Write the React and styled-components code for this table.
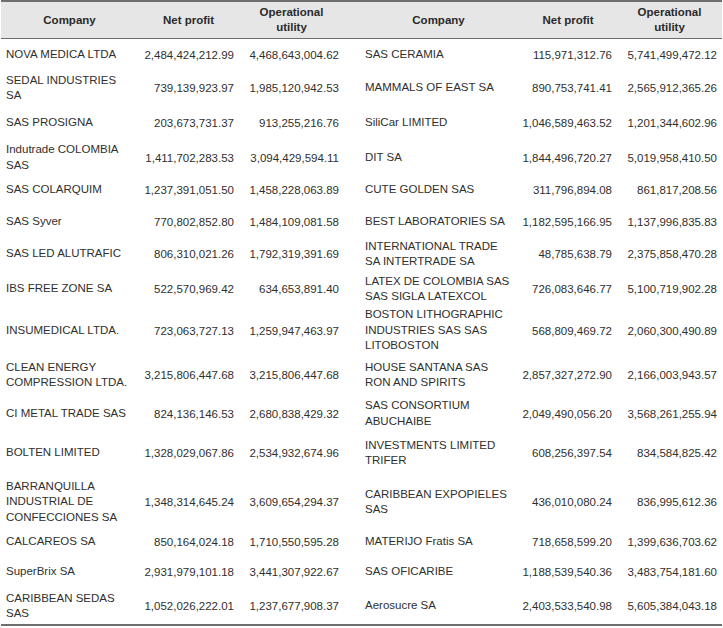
import React from "react";
import styled, { createGlobalStyle } from "styled-components";

const GlobalStyle = createGlobalStyle`
    body {
        margin: 0;
        background: #ffffff;
        font-family: "Liberation Sans", Arial, sans-serif;
    }
`;

const Page = styled.div`
    width: 723px;
    height: 628px;
    padding: 0 1px 0 1px;
    box-sizing: border-box;
    background: #ffffff;
`;

const Table = styled.table`
    width: 721px;
    table-layout: fixed;
    border-collapse: collapse;
    border-top: 2px solid #6e6e6e;
    border-bottom: 2px solid #6e6e6e;
    font-size: 11.5px;
    color: #2f2f2f;
`;

const HeadRow = styled.tr`
    height: 37px;
    background: #e6e6e6;
    border-bottom: 1.5px solid #6e6e6e;
`;

const HeadCell = styled.th`
    font-weight: bold;
    text-align: center;
    line-height: 15px;
    padding: 1px 4px 0 4px;
    color: #2a2a2a;
`;

const Row = styled.tr`
    height: ${(p) => p.h}px;
`;

const NameCell = styled.td`
    text-align: left;
    vertical-align: middle;
    line-height: 15.5px;
    padding: 0 4px 0 ${(p) => (p.right ? 7 : 5)}px;
    white-space: nowrap;
`;

const NumCell = styled.td`
    text-align: right;
    vertical-align: middle;
    padding: 0 5px 0 0;
    white-space: nowrap;
`;

const Gap = styled.td``;

// heights taken from the picture, rows are uneven
const rows = [
    [33, ["NOVA MEDICA LTDA"], "2,484,424,212.99", "4,468,643,004.62", ["SAS CERAMIA"], "115,971,312.76", "5,741,499,472.12"],
    [34, ["SEDAL INDUSTRIES", "SA"], "739,139,923.97", "1,985,120,942.53", ["MAMMALS OF EAST SA"], "890,753,741.41", "2,565,912,365.26"],
    [36, ["SAS PROSIGNA"], "203,673,731.37", "913,255,216.76", ["SiliCar LIMITED"], "1,046,589,463.52", "1,201,344,602.96"],
    [33, ["Indutrade COLOMBIA", "SAS"], "1,411,702,283.53", "3,094,429,594.11", ["DIT SA"], "1,844,496,720.27", "5,019,958,410.50"],
    [32, ["SAS COLARQUIM"], "1,237,391,051.50", "1,458,228,063.89", ["CUTE GOLDEN SAS"], "311,796,894.08", "861,817,208.56"],
    [31, ["SAS Syver"], "770,802,852.80", "1,484,109,081.58", ["BEST LABORATORIES SA"], "1,182,595,166.95", "1,137,996,835.83"],
    [34, ["SAS LED ALUTRAFIC"], "806,310,021.26", "1,792,319,391.69", ["INTERNATIONAL TRADE", "SA INTERTRADE SA"], "48,785,638.79", "2,375,858,470.28"],
    [36, ["IBS FREE ZONE SA"], "522,570,969.42", "634,653,891.40", ["LATEX DE COLOMBIA SAS", "SAS SIGLA LATEXCOL"], "726,083,646.77", "5,100,719,902.28"],
    [47, ["INSUMEDICAL LTDA."], "723,063,727.13", "1,259,947,463.97", ["BOSTON LITHOGRAPHIC", "INDUSTRIES SAS SAS", "LITOBOSTON"], "568,809,469.72", "2,060,300,490.89"],
    [42, ["CLEAN ENERGY", "COMPRESSION LTDA."], "3,215,806,447.68", "3,215,806,447.68", ["HOUSE SANTANA SAS", "RON AND SPIRITS"], "2,857,327,272.90", "2,166,003,943.57"],
    [35, ["CI METAL TRADE SAS"], "824,136,146.53", "2,680,838,429.32", ["SAS CONSORTIUM", "ABUCHAIBE"], "2,049,490,056.20", "3,568,261,255.94"],
    [44, ["BOLTEN LIMITED"], "1,328,029,067.86", "2,534,932,674.96", ["INVESTMENTS LIMITED", "TRIFER"], "608,256,397.54", "834,584,825.42"],
    [54, ["BARRANQUILLA", "INDUSTRIAL DE", "CONFECCIONES SA"], "1,348,314,645.24", "3,609,654,294.37", ["CARIBBEAN EXPOPIELES", "SAS"], "436,010,080.24", "836,995,612.36"],
    [26, ["CALCAREOS SA"], "850,164,024.18", "1,710,550,595.28", ["MATERIJO Fratis SA"], "718,658,599.20", "1,399,636,703.62"],
    [33, ["SuperBrix SA"], "2,931,979,101.18", "3,441,307,922.67", ["SAS OFICARIBE"], "1,188,539,540.36", "3,483,754,181.60"],
    [37, ["CARIBBEAN SEDAS", "SAS"], "1,052,026,222.01", "1,237,677,908.37", ["Aerosucre SA"], "2,403,533,540.98", "5,605,384,043.18"],
];

function Lines({ lines }) {
    return lines.map((l, i) => (
        <React.Fragment key={i}>
            {i > 0 && <br />}
            {l}
        </React.Fragment>
    ));
}

function Header() {
    return (
        <HeadRow>
            <HeadCell>Company</HeadCell>
            <HeadCell>Net profit</HeadCell>
            <HeadCell>Operational<br />utility</HeadCell>
            <Gap />
            <HeadCell>Company</HeadCell>
            <HeadCell>Net profit</HeadCell>
            <HeadCell>Operational<br />utility</HeadCell>
        </HeadRow>
    );
}

export default function App() {
    return (
        <Page>
            <GlobalStyle />
            <Table>
                <colgroup>
                    <col style={{ width: 137 }} />
                    <col style={{ width: 101 }} />
                    <col style={{ width: 105 }} />
                    <col style={{ width: 14 }} />
                    <col style={{ width: 161 }} />
                    <col style={{ width: 98 }} />
                    <col style={{ width: 105 }} />
                </colgroup>
                <thead>
                    <Header />
                </thead>
                <tbody>
                    {rows.map((r, i) => (
                        <Row key={i} h={r[0]}>
                            <NameCell><Lines lines={r[1]} /></NameCell>
                            <NumCell>{r[2]}</NumCell>
                            <NumCell>{r[3]}</NumCell>
                            <Gap />
                            <NameCell right><Lines lines={r[4]} /></NameCell>
                            <NumCell>{r[5]}</NumCell>
                            <NumCell>{r[6]}</NumCell>
                        </Row>
                    ))}
                </tbody>
            </Table>
        </Page>
    );
}
